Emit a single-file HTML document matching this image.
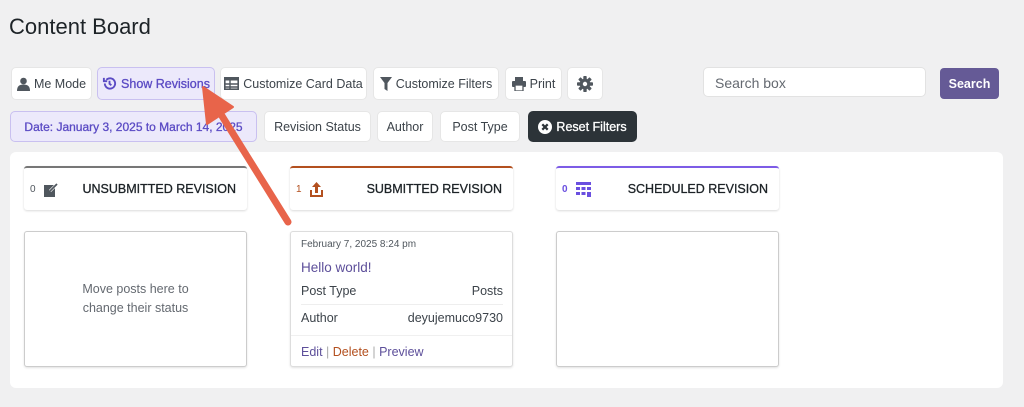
<!DOCTYPE html>
<html><head><meta charset="utf-8"><style>
*{box-sizing:border-box;margin:0;padding:0}
body{width:1024px;height:407px;background:#f0f0f1;font-family:"Liberation Sans",sans-serif;position:relative;overflow:hidden;color:#2c3338}
.a{position:absolute}
.btn{position:absolute;background:#fff;border-radius:5px;font-size:12.5px;color:#3c434a;display:flex;align-items:center;justify-content:center;gap:4px;border:1px solid #e6e6e6}
.col{position:absolute;background:#fff;border-radius:3px;box-shadow:0 1px 2px rgba(0,0,0,.15);height:44px;top:166px;width:223px;display:flex;align-items:center;font-size:12.5px;color:#1d2327;-webkit-text-stroke:0.3px #1d2327}
.box{position:absolute;top:231px;width:223px;height:136px;background:#fff;border:1px solid #ccc;border-radius:3px;box-shadow:0 1px 2px rgba(0,0,0,.12)}
.pur{background:#ece9fb;border-color:#c9c0f0;color:#5b4bc4;-webkit-text-stroke:0.3px #5b4bc4}
</style></head><body>
<div class="a" style="left:9px;top:14px;font-size:22px;color:#1d2327">Content Board</div>

<div class="btn" style="left:11px;top:67px;width:81px;height:33px"><svg width="13" height="14" viewBox="0 0 13 14"><circle cx="6.5" cy="4" r="3.3" fill="#50575e"/><path d="M0 14c0-5 2.5-6.5 6.5-6.5S13 9 13 14z" fill="#50575e"/></svg>Me Mode</div>
<div class="btn pur" style="left:97px;top:67px;width:118px;height:33px"><svg width="15" height="15" viewBox="0 0 16 16" fill="none" stroke="#5b4bc4" stroke-width="2"><path d="M3 8a5.5 5.5 0 1 0 1.6-3.9"/><path d="M2 2v3.5h3.5"/><path d="M8 5v3.3l2 1.5"/></svg>Show Revisions</div>
<div class="btn" style="left:220px;top:67px;width:147px;height:33px"><svg width="15" height="13" viewBox="0 0 15 13"><rect x="0.8" y="0.8" width="13.4" height="11.4" fill="none" stroke="#50575e" stroke-width="1.6"/><rect x="0" y="0" width="15" height="3.5" fill="#50575e"/><path d="M1 7h13M1 10h13M6 3v9" stroke="#50575e" stroke-width="1.4"/></svg>Customize Card Data</div>
<div class="btn" style="left:373px;top:67px;width:126px;height:33px"><svg width="12" height="14" viewBox="0 0 12 14"><path d="M0 0h12L7.5 6v8L4.5 12V6z" fill="#50575e"/></svg>Customize Filters</div>
<div class="btn" style="left:505px;top:67px;width:57px;height:33px"><svg width="14" height="14" viewBox="0 0 14 14"><rect x="3" y="0" width="8" height="4" fill="#50575e"/><rect x="0" y="4" width="14" height="6" rx="1" fill="#50575e"/><rect x="3" y="8" width="8" height="6" fill="#fff" stroke="#50575e" stroke-width="1.3"/></svg>Print</div>
<div class="btn" style="left:567px;top:67px;width:36px;height:33px"><svg width="16" height="16" viewBox="0 0 16 16"><g fill="#50575e"><rect x="6.3" y="0" width="3.4" height="16" rx="0.8"/><rect x="0" y="6.3" width="16" height="3.4" rx="0.8"/><rect x="6.3" y="0" width="3.4" height="16" rx="0.8" transform="rotate(45 8 8)"/><rect x="6.3" y="0" width="3.4" height="16" rx="0.8" transform="rotate(-45 8 8)"/><circle cx="8" cy="8" r="5.3"/></g><circle cx="8" cy="8" r="2.2" fill="#fff"/></svg></div>

<div class="a" style="left:703px;top:67px;width:223px;height:30px;background:#fff;border:1px solid #e2e2e2;border-radius:5px;font-size:14px;color:#646970;padding:7px 11px">Search box</div>
<div class="a" style="left:940px;top:68px;width:59px;height:31px;background:#655a96;border-radius:4px;color:#fff;font-size:12.5px;font-weight:bold;display:flex;align-items:center;justify-content:center">Search</div>

<div class="btn pur" style="left:10px;top:111px;width:247px;height:31px;font-size:12px">Date: January 3, 2025 to March 14, 2025</div>
<div class="btn" style="left:264px;top:111px;width:107px;height:31px">Revision Status</div>
<div class="btn" style="left:377px;top:111px;width:56px;height:31px">Author</div>
<div class="btn" style="left:440px;top:111px;width:80px;height:31px">Post Type</div>
<div class="btn" style="left:528px;top:111px;width:109px;height:31px;background:#2c3338;border-color:#2c3338;color:#fff;-webkit-text-stroke:0.3px #fff"><svg width="14" height="14" viewBox="0 0 14 14"><circle cx="7" cy="7" r="7" fill="#fff"/><path d="M4.3 4.3l5.4 5.4M9.7 4.3l-5.4 5.4" stroke="#2c3338" stroke-width="2.2"/></svg>Reset Filters</div>

<div class="a" style="left:10px;top:152px;width:993px;height:236px;background:#fff;border-radius:6px"></div>

<div class="col" style="left:24px;border-top:2px solid #777"><span style="font-size:10px;color:#50575e;margin-left:6px;-webkit-text-stroke:0">0</span><svg style="margin-left:8px" width="15" height="15" viewBox="0 0 15 15"><rect x="0" y="3" width="11" height="12" fill="#50575e"/><path d="M6 9l7-7" stroke="#fff" stroke-width="3"/><path d="M6 9l7-7" stroke="#50575e" stroke-width="1.8"/></svg><span style="margin-left:auto;margin-right:11px">UNSUBMITTED REVISION</span></div>
<div class="col" style="left:290px;border-top:2px solid #b3501f"><span style="font-size:10px;color:#b3501f;margin-left:6px;-webkit-text-stroke:0">1</span><svg style="margin-left:8px" width="13" height="15" viewBox="0 0 13 15"><path d="M6.5 0L2 5h3v6h3V5h3z" fill="#b3501f"/><path d="M1 8v6h11V8" fill="none" stroke="#b3501f" stroke-width="2"/></svg><span style="margin-left:auto;margin-right:11px">SUBMITTED REVISION</span></div>
<div class="col" style="left:556px;border-top:2px solid #7d5ce6"><span style="font-size:10px;color:#6a4fe0;margin-left:6px;font-weight:bold;-webkit-text-stroke:0">0</span><svg style="margin-left:8px" width="15" height="15" viewBox="0 0 15 15" fill="#6a4fe0"><rect x="0" y="0" width="15" height="3"/><rect x="0" y="5" width="4" height="3"/><rect x="5.5" y="5" width="4" height="3"/><rect x="11" y="5" width="4" height="3"/><rect x="0" y="10" width="4" height="3"/><rect x="11" y="10" width="4" height="5"/><rect x="5.5" y="10" width="4" height="3"/></svg><span style="margin-left:auto;margin-right:11px">SCHEDULED REVISION</span></div>

<div class="box" style="left:24px;display:flex;align-items:center;justify-content:center;text-align:center;font-size:12.5px;color:#646970;line-height:19px">Move posts here to<br>change their status</div>
<div class="box" style="left:290px;border-color:#ddd">
 <div class="a" style="left:10px;top:7px;font-size:10px;color:#50575e">February 7, 2025 8:24 pm</div>
 <div class="a" style="left:10px;top:28px;font-size:13.5px;color:#5d4f9a">Hello world!</div>
 <div class="a" style="left:10px;top:52px;width:202px;font-size:12.5px;color:#3c434a;display:flex;justify-content:space-between"><span>Post Type</span><span>Posts</span></div>
 <div class="a" style="left:10px;top:72px;width:202px;border-top:1px solid #eee"></div>
 <div class="a" style="left:10px;top:79px;width:202px;font-size:12.5px;color:#3c434a;display:flex;justify-content:space-between"><span>Author</span><span>deyujemuco9730</span></div>
 <div class="a" style="left:0;top:103px;width:221px;border-top:1px solid #f0f0f0"></div>
 <div class="a" style="left:10px;top:113px;font-size:12.5px;color:#5d4f9a">Edit <span style="color:#aaa">|</span> <span style="color:#b3501f">Delete</span> <span style="color:#aaa">|</span> Preview</div>
</div>
<div class="box" style="left:556px"></div>

<svg class="a" style="left:0;top:0" width="1024" height="407"><line x1="288" y1="222" x2="222" y2="116" stroke="#e8644a" stroke-width="7" stroke-linecap="round"/><path d="M203 87L233 107L207 124z" fill="#e8644a" stroke="#e8644a" stroke-width="2" stroke-linejoin="round"/></svg>
</body></html>
